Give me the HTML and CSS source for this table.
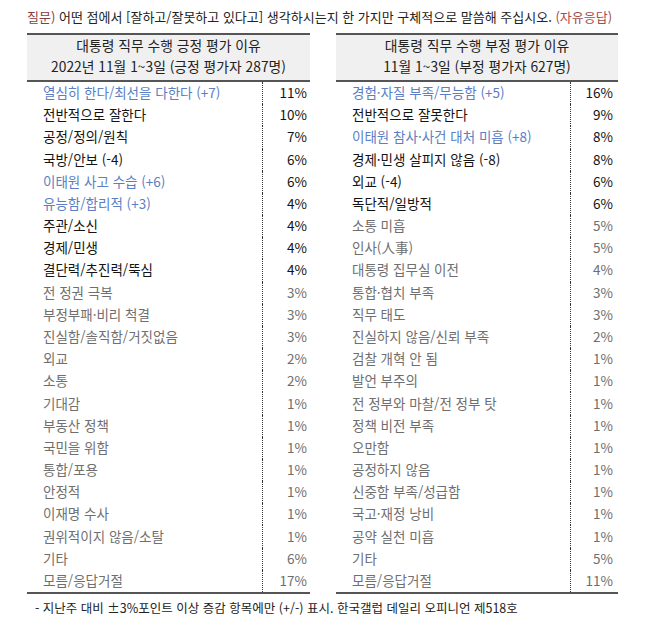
FILE: index.html
```html
<!DOCTYPE html>
<html lang="ko">
<head>
<meta charset="utf-8">
<link rel="stylesheet" href="styles.css">
</head>
<body>
<div class="page">
  <p class="question"><span class="q-tag">질문)</span> 어떤 점에서 [잘하고/잘못하고 있다고] 생각하시는지 한 가지만 구체적으로 말씀해 주십시오. <span class="q-tag2">(자유응답)</span></p>
  <div class="tables">
    <section class="table">
      <div class="head">
        <div>대통령 직무 수행 긍정 평가 이유</div>
        <div>2022년 11월 1~3일 (긍정 평가자 287명)</div>
      </div>
      <div class="rows">
        <div class="label blue">열심히 한다/최선을 다한다 (+7)</div><div class="pct dark">11%</div>
        <div class="label dark">전반적으로 잘한다</div><div class="pct dark">10%</div>
        <div class="label dark">공정/정의/원칙</div><div class="pct dark">7%</div>
        <div class="label dark">국방/안보 (-4)</div><div class="pct dark">6%</div>
        <div class="label blue">이태원 사고 수습 (+6)</div><div class="pct dark">6%</div>
        <div class="label blue">유능함/합리적 (+3)</div><div class="pct dark">4%</div>
        <div class="label dark">주관/소신</div><div class="pct dark">4%</div>
        <div class="label dark">경제/민생</div><div class="pct dark">4%</div>
        <div class="label dark">결단력/추진력/뚝심</div><div class="pct dark">4%</div>
        <div class="label">전 정권 극복</div><div class="pct">3%</div>
        <div class="label">부정부패·비리 척결</div><div class="pct">3%</div>
        <div class="label">진실함/솔직함/거짓없음</div><div class="pct">3%</div>
        <div class="label">외교</div><div class="pct">2%</div>
        <div class="label">소통</div><div class="pct">2%</div>
        <div class="label">기대감</div><div class="pct">1%</div>
        <div class="label">부동산 정책</div><div class="pct">1%</div>
        <div class="label">국민을 위함</div><div class="pct">1%</div>
        <div class="label">통합/포용</div><div class="pct">1%</div>
        <div class="label">안정적</div><div class="pct">1%</div>
        <div class="label">이재명 수사</div><div class="pct">1%</div>
        <div class="label">권위적이지 않음/소탈</div><div class="pct">1%</div>
        <div class="label">기타</div><div class="pct">6%</div>
        <div class="label">모름/응답거절</div><div class="pct">17%</div>
      </div>
    </section>
    <section class="table">
      <div class="head">
        <div>대통령 직무 수행 부정 평가 이유</div>
        <div>11월 1~3일 (부정 평가자 627명)</div>
      </div>
      <div class="rows">
        <div class="label blue">경험·자질 부족/무능함 (+5)</div><div class="pct dark">16%</div>
        <div class="label dark">전반적으로 잘못한다</div><div class="pct dark">9%</div>
        <div class="label blue">이태원 참사·사건 대처 미흡 (+8)</div><div class="pct dark">8%</div>
        <div class="label dark">경제·민생 살피지 않음 (-8)</div><div class="pct dark">8%</div>
        <div class="label dark">외교 (-4)</div><div class="pct dark">6%</div>
        <div class="label dark">독단적/일방적</div><div class="pct dark">6%</div>
        <div class="label">소통 미흡</div><div class="pct">5%</div>
        <div class="label">인사(人事)</div><div class="pct">5%</div>
        <div class="label">대통령 집무실 이전</div><div class="pct">4%</div>
        <div class="label">통합·협치 부족</div><div class="pct">3%</div>
        <div class="label">직무 태도</div><div class="pct">3%</div>
        <div class="label">진실하지 않음/신뢰 부족</div><div class="pct">2%</div>
        <div class="label">검찰 개혁 안 됨</div><div class="pct">1%</div>
        <div class="label">발언 부주의</div><div class="pct">1%</div>
        <div class="label">전 정부와 마찰/전 정부 탓</div><div class="pct">1%</div>
        <div class="label">정책 비전 부족</div><div class="pct">1%</div>
        <div class="label">오만함</div><div class="pct">1%</div>
        <div class="label">공정하지 않음</div><div class="pct">1%</div>
        <div class="label">신중함 부족/성급함</div><div class="pct">1%</div>
        <div class="label">국고·재정 낭비</div><div class="pct">1%</div>
        <div class="label">공약 실천 미흡</div><div class="pct">1%</div>
        <div class="label">기타</div><div class="pct">5%</div>
        <div class="label">모름/응답거절</div><div class="pct">11%</div>
      </div>
    </section>
  </div>
  <p class="footer">- 지난주 대비 ±3%포인트 이상 증감 항목에만 (+/-) 표시. 한국갤럽 데일리 오피니언 제518호</p>
</div>
</body>
</html>
```

FILE: styles.css
```css
html, body {
  margin: 0;
  padding: 0;
  background: #ffffff;
}
body {
  font-family: "Noto Sans CJK KR", "Noto Sans", sans-serif;
  color: #222222;
  font-size: 13.5px;
}
.page {
  width: 650px;
  height: 618px;
  position: relative;
}
.question {
  margin: 0;
  padding: 7px 0 0 27px;
  height: 26px;
  line-height: 20px;
  font-size: 13px;
  color: #222222;
  white-space: nowrap;
}
.q-tag {
  color: #8e3b3b;
}
.q-tag2 {
  color: #a54c4c;
}
.tables {
  display: flex;
  gap: 26px;
  padding-left: 27px;
}
.table {
  width: 283px;
  border-bottom: 2px solid #555555;
}
.table + .table {
  width: 282px;
}
.head {
  background: #f0f0f0;
  border-top: 2px solid #555555;
  border-bottom: 2px solid #555555;
  text-align: center;
  line-height: 21px;
  padding-bottom: 3px;
  font-size: 13.8px;
  color: #222222;
}
.rows {
  display: grid;
  grid-template-columns: 1fr 48px;
  grid-template-rows: repeat(23, 1fr);
  height: 510px;
}
.label {
  padding-left: 16px;
  padding-bottom: 2px;
  color: #6f6f6f;
  white-space: nowrap;
  display: flex;
  align-items: center;
}
.pct {
  border-left: 1px dotted #333333;
  text-align: right;
  padding-right: 3px;
  padding-bottom: 2px;
  color: #6f6f6f;
  display: flex;
  align-items: center;
  justify-content: flex-end;
}
.table + .table .pct {
  padding-right: 5px;
}
.label.dark, .pct.dark {
  color: #141414;
}
.label.blue {
  color: #5b7ec4;
}
.footer {
  margin: 0;
  padding: 4px 0 0 35px;
  line-height: 20px;
  font-size: 12.5px;
  color: #222222;
  white-space: nowrap;
}
```
